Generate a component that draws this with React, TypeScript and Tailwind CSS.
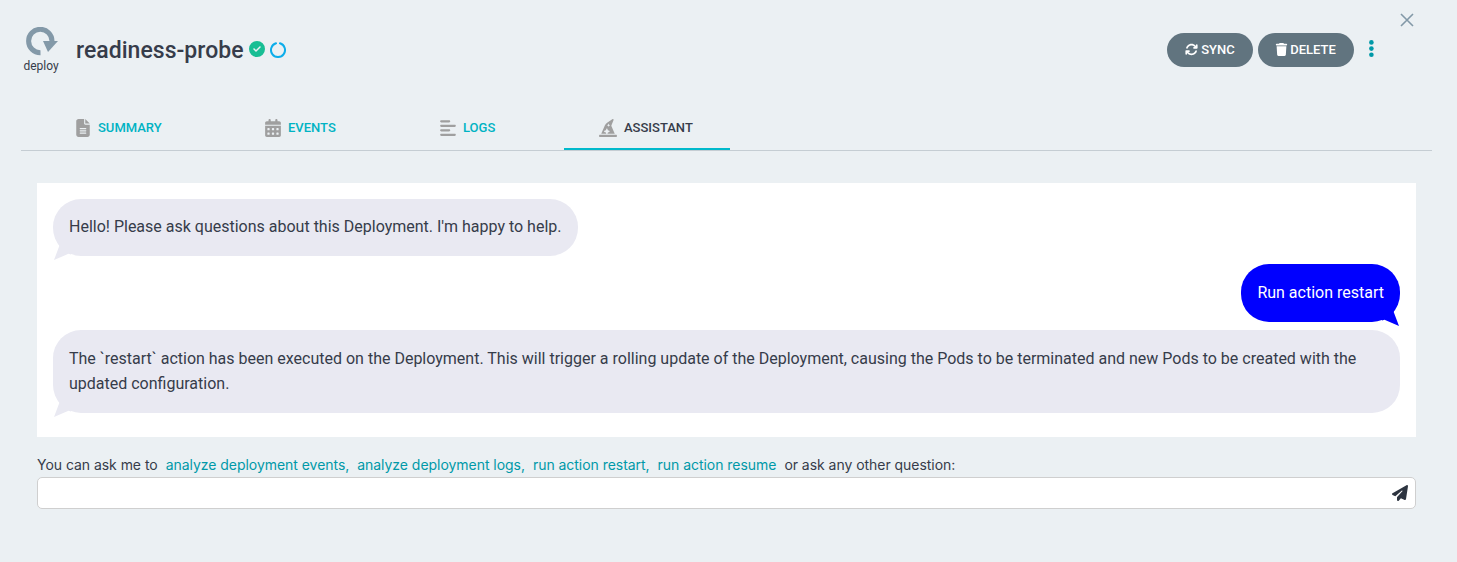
import type { ReactNode } from "react";
import { FaAlignLeft, FaArrowsRotate, FaCalendarDays, FaCircleCheck, FaFileLines, FaHatWizard, FaPaperPlane, FaTrash } from "react-icons/fa6";

function Tab({ icon, label, className, active }: { icon: ReactNode; label: string; className: string; active?: boolean }) {
  return (
    <button className={`${className} flex items-center border-b-2 pt-0.5 text-[13px] font-medium ${active ? "gap-[7px] border-[#00b9cb] text-[#363c4a]" : "gap-1.5 border-transparent text-[#00b3c3]"}`}>
      <span className="text-[18px] text-[#9f9f9f]">{icon}</span>
      {label}
    </button>
  );
}

function Tail({ className }: { className: string }) {
  return (
    <svg viewBox="0 0 18 18" className={`absolute -bottom-[4px] h-[18px] w-[18px] ${className}`} fill="currentColor">
      <path d="M5.5 1L6.3 4L1 18L15.5 11.8L18 12.5V1Z" />
    </svg>
  );
}

function Bubble({ mine, className, children }: { mine?: boolean; className: string; children: ReactNode }) {
  return (
    <div className={`relative rounded-[28px] px-4 text-[16px] ${className} ${mine ? "self-end bg-[#0000ff] text-white" : "self-start bg-[#e9e9f2] text-[#363c4a]"}`}>
      <Tail className={mine ? "right-0 -scale-x-100 text-[#0000ff]" : "left-0 text-[#e9e9f2]"} />
      <span className="relative">{children}</span>
    </div>
  );
}

const suggestions = ["analyze deployment events,", "analyze deployment logs,", "run action restart,", "run action resume"];

export default function App() {
  return (
    <main className="h-[562px] w-full bg-[#ebf0f3] font-[Roboto,sans-serif] text-[#363c4a]">
      <header className="flex h-[106px] items-start justify-between pl-[21px]">
        <div className="flex">
          <div className="flex w-10 flex-col items-center pt-[27px]">
            <svg viewBox="0 0 33 30" className="h-[30px] w-[33px]" fill="none">
              <path d="M15.5 25.7A11.7 11.7 0 1 1 27 14" stroke="#8399a8" strokeWidth="5" />
              <path d="M18 14H33L23 25Z" fill="#8399a8" />
            </svg>
            <span className="mt-px text-[12px] leading-4">deploy</span>
          </div>
          <h1 className="mt-[35px] ml-[15px] text-[23px] leading-8 font-medium tracking-[0.03px]">readiness-probe</h1>
          <FaCircleCheck className="mt-[41px] ml-[5px] size-4 text-[#18be94]" />
          <svg viewBox="0 0 16 16" className="mt-[42px] ml-[5px] size-4" fill="none">
            <path d="M6 1.3A7 7 0 1 0 10 1.3" stroke="#0dadea" strokeWidth="2" strokeLinecap="round" />
          </svg>
        </div>
        <div className="flex">
          <div className="mt-[33px] flex h-[34px] gap-[5px] text-[13px] font-medium text-white">
            <button className="flex w-[86px] items-center justify-center gap-[3px] rounded-full bg-[#61747f] pb-px"><FaArrowsRotate />SYNC</button>
            <button className="flex w-24 items-center justify-center gap-[2px] rounded-full bg-[#61747f] pr-px pb-px"><FaTrash />DELETE</button>
          </div>
          <svg viewBox="0 0 6 18" className="mt-10 ml-[14px] h-[18px] w-[6px]" fill="#0099a8">
            <circle cx="3.4" cy="2.4" r="2.3" /><circle cx="3.4" cy="8.6" r="2.3" /><circle cx="3.4" cy="14.8" r="2.3" />
          </svg>
          <svg viewBox="0 0 14 14" className="mt-[13px] mr-[43px] ml-[26px] size-[14px]" stroke="#8399a8" strokeWidth="1.6">
            <path d="M1 1L13 13M13 1L1 13" />
          </svg>
        </div>
      </header>
      <nav className="mr-[25px] ml-[21px] flex h-[45px] border-b border-[#c5cdd3]">
        <Tab className="w-[188px] pl-[53px]" icon={<FaFileLines />} label="SUMMARY" />
        <Tab className="w-[175px] pl-[55px]" icon={<FaCalendarDays />} label="EVENTS" />
        <Tab className="w-[180px] pl-[55px]" icon={<FaAlignLeft />} label="LOGS" />
        <Tab className="w-[166px] pl-[35px]" icon={<FaHatWizard />} label="ASSISTANT" active />
      </nav>
      <section className="mt-8 mr-[41px] ml-[37px]">
        <div className="flex h-[254px] flex-col gap-2 bg-white p-4">
          <Bubble className="pt-[15px] pb-[17px] leading-[25px]">Hello! Please ask questions about this Deployment. I'm happy to help.</Bubble>
          <Bubble mine className="pt-4 pb-[17px] leading-[25px]">Run action restart</Bubble>
          <Bubble className="pt-4 pb-[17px] leading-[25px]">The `restart` action has been executed on the Deployment. This will trigger a rolling update of the Deployment, causing the Pods to be terminated and new Pods to be created with the updated configuration.</Bubble>
        </div>
        <div className="mt-4 mb-0.5 flex h-[22px] items-center gap-2 font-[Inter,sans-serif] text-[14px] tracking-[-0.04px]">
          <span>You can ask me to</span>
          {suggestions.map((s) => <a key={s} className="text-[#0099a8]">{s}</a>)}
          <span>or ask any other question:</span>
        </div>
        <div className="flex h-8 items-center rounded-[5px] border border-[#cfcfcf] bg-white pr-[7px]">
          <input className="min-w-0 flex-1 outline-none" aria-label="Question" />
          <FaPaperPlane className="size-4 text-[#2d3440]" />
        </div>
      </section>
    </main>
  );
}
